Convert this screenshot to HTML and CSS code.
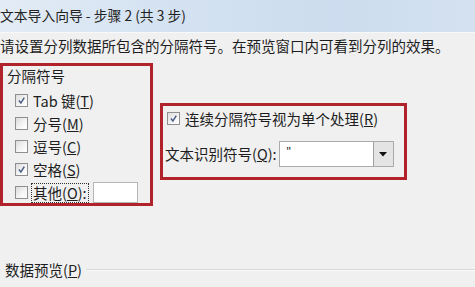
FILE: index.html
```html
<!DOCTYPE html>
<html lang="zh-CN">
<head>
    <meta charset="UTF-8">
    <title>文本导入向导 - 步骤 2 (共 3 步)</title>
    <link rel="stylesheet" href="styles.css">
</head>
<body>
    <div class="window">
        <div class="titlebar">文本导入向导 - 步骤 2 (共 3 步)</div>

        <div class="intro">请设置分列数据所包含的分隔符号。在预览窗口内可看到分列的效果。</div>

        <div class="options">
            <div class="group mark">
                <div class="group-title">分隔符号</div>
                <div class="row">
                    <span class="check checked"><svg viewBox="0 0 13 13"><path d="M3.5 6.5 L5.8 9.5 L9.8 3.2"/></svg></span>
                    <span class="label">Tab 键(<u>T</u>)</span>
                </div>
                <div class="row">
                    <span class="check"></span>
                    <span class="label">分号(<u>M</u>)</span>
                </div>
                <div class="row">
                    <span class="check"></span>
                    <span class="label">逗号(<u>C</u>)</span>
                </div>
                <div class="row">
                    <span class="check checked"><svg viewBox="0 0 13 13"><path d="M3.5 6.5 L5.8 9.5 L9.8 3.2"/></svg></span>
                    <span class="label">空格(<u>S</u>)</span>
                </div>
                <div class="row">
                    <span class="check"></span>
                    <span class="label focused">其他(<u>O</u>):</span>
                    <span class="other-input"></span>
                </div>
            </div>

            <div class="side mark">
                <div class="row">
                    <span class="check checked"><svg viewBox="0 0 13 13"><path d="M3.5 6.5 L5.8 9.5 L9.8 3.2"/></svg></span>
                    <span class="label">连续分隔符号视为单个处理(<u>R</u>)</span>
                </div>
                <div class="select-row">
                    <span class="label">文本识别符号(<u>Q</u>):</span>
                    <div class="select">
                        <span class="select-value">"</span>
                        <span class="select-button"><svg viewBox="0 0 8 5"><path d="M0 0 H8 L4 4.5 Z"/></svg></span>
                    </div>
                </div>
            </div>
        </div>

        <div class="preview">
            <span class="preview-title">数据预览(<u>P</u>)</span>
            <span class="preview-line"></span>
        </div>
    </div>
</body>
</html>
```

FILE: styles.css
```css
body {
    margin: 0;
    background-color: #f0f0f0;
    font-family: "Noto Sans CJK SC", "DejaVu Sans", sans-serif;
    font-size: 14.5px;
    color: #1e1e1e;
}

.window {
    width: 475px;
    height: 287px;
    overflow: hidden;
}

.titlebar {
    height: 32px;
    line-height: 30px;
    font-size: 13.8px;
    color: #222;
    background: linear-gradient(90deg, #e3ecf6 0%, #d4e2f1 35%, #cddcee 70%, #d3e1f0 100%);
    border-bottom: 1px solid #f6f9fc;
}

.intro {
    margin-top: 3px;
    line-height: 20px;
    white-space: nowrap;
}

.options {
    display: flex;
    align-items: flex-start;
    margin-top: 7px;
}

.mark {
    border: 3px solid #b1232b;
    box-sizing: border-box;
}

.group {
    width: 153px;
    height: 143px;
    padding: 1px 0 0 3px;
}

.group-title {
    line-height: 18px;
    margin-bottom: 4px;
    padding-left: 1px;
}

.row {
    display: flex;
    align-items: center;
    height: 23px;
}

.group .row .check {
    margin-left: 9px;
}

.check {
    width: 13px;
    height: 13px;
    box-sizing: border-box;
    border: 1px solid #8f8f8f;
    background: linear-gradient(135deg, #dcdcdc 0%, #f6f6f6 60%, #ffffff 100%);
    flex-shrink: 0;
}

.check svg {
    display: block;
    width: 11px;
    height: 11px;
}

.check svg path {
    fill: none;
    stroke: #4a5f86;
    stroke-width: 1.8;
}

.label {
    margin-left: 5px;
    white-space: nowrap;
    line-height: 18px;
}

.label u {
    text-decoration-thickness: 1px;
}

.focused {
    outline: 1px dotted #333;
    padding: 0 1px;
    margin-left: 4px;
}

.other-input {
    width: 45px;
    height: 21px;
    box-sizing: border-box;
    margin-left: 5px;
    background-color: #fff;
    border: 1px solid #b5b5b5;
}

.side {
    width: 247px;
    margin: 40px 0 0 7px;
    padding: 1px 0 10px 4px;
}

.select-row {
    display: flex;
    align-items: center;
    margin-top: 11px;
}

.select-row .label {
    margin-left: -2px;
}

.select {
    display: flex;
    width: 115px;
    height: 26px;
    box-sizing: border-box;
    margin-left: 2px;
    background-color: #fff;
    border: 1px solid #ababab;
}

.select-value {
    flex: 1;
    padding-left: 7px;
    line-height: 20px;
    font-family: "Liberation Sans", sans-serif;
    font-size: 12px;
}

.select-button {
    display: flex;
    align-items: center;
    justify-content: center;
    width: 19px;
    background-color: #e4e4e4;
    border-left: 1px solid #a0a0a0;
}

.select-button svg {
    width: 8px;
    height: 5px;
    fill: #111;
}

.preview {
    display: flex;
    align-items: center;
    margin-top: 54px;
    padding-left: 5px;
}

.preview-title {
    line-height: 20px;
    white-space: nowrap;
}

.preview-line {
    flex: 1;
    height: 0;
    margin-left: 4px;
    border-top: 1px solid #dadada;
    border-bottom: 1px solid #fafafa;
}
```
